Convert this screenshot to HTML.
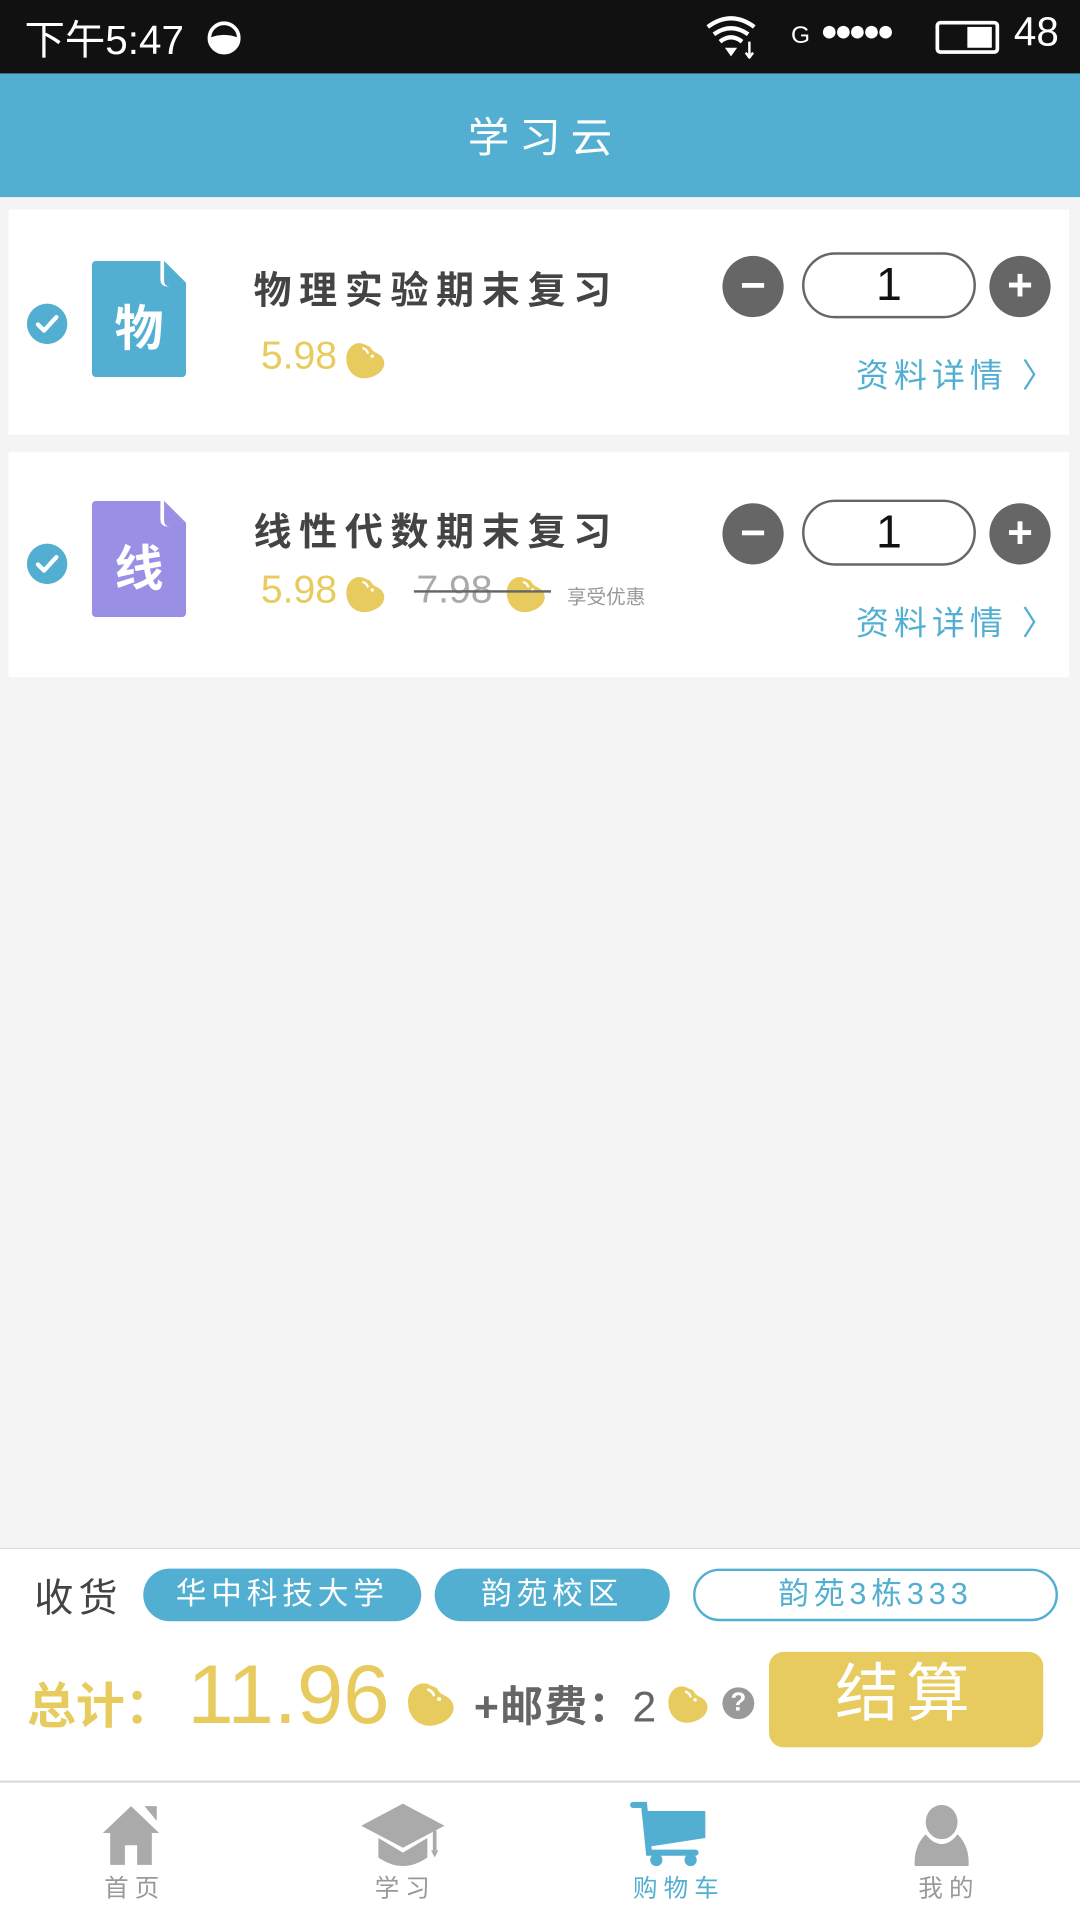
<!DOCTYPE html>
<html><head><meta charset="utf-8"><style>
*{margin:0;padding:0;box-sizing:border-box}
html,body{width:1080px;height:1920px;overflow:hidden;background:#f4f4f4}
#s{position:absolute;left:0;top:0;width:882px;height:1568px;transform:scale(1.22449);transform-origin:0 0;font-family:"Liberation Sans","Noto Sans CJK SC",sans-serif;background:#f4f4f4}
.a{position:absolute;white-space:nowrap}
.card{position:absolute;left:7px;width:866px;height:184px;background:#fff}
.chk{position:absolute;left:15px;width:33px;height:33px;border-radius:50%;background:#52afd1}
.title{position:absolute;left:200px;font-size:31px;font-weight:bold;color:#444;letter-spacing:6.3px}
.price{position:absolute;font-size:32px;color:#e8cb5e}
.btn{position:absolute;width:50px;height:50px;border-radius:50%;background:#666;color:#fff;text-align:center;line-height:48px;font-size:36px;font-weight:bold}
.qty{position:absolute;left:648px;width:142px;height:54px;border:2px solid #666;border-radius:27px;text-align:center;font-size:38px;line-height:50px;color:#111}
.det{position:absolute;left:692px;font-size:27px;color:#52afd1;letter-spacing:4px}
.pill{position:absolute;top:1281px;height:43px;border-radius:22px;background:#52afd1;color:#fff;font-size:25px;text-align:center;line-height:43px;letter-spacing:4px}
.tab{position:absolute;top:1526px;font-size:20px;color:#999;letter-spacing:5px}
</style></head><body><div id="s">
<svg width="0" height="0" style="position:absolute"><defs>
<symbol id="bean" viewBox="0 0 40 36"><path d="M20 4C12 -1 2 6 3 18C4 30 14 36 24 33C36 30 40 20 34 14C31 11 27 11 25 7C24 5 22 5 20 4Z" fill="#e8cb5e"/><path d="M18 7Q21 8 22 11" stroke="#fff" stroke-width="2" fill="none" stroke-linecap="round"/><circle cx="26" cy="14" r="1.5" fill="#fff"/></symbol>
<symbol id="chk" viewBox="0 0 33 33"><path d="M9 17L14 22L24 11" stroke="#fff" stroke-width="3.5" fill="none" stroke-linecap="round" stroke-linejoin="round"/></symbol>
</defs></svg>
<div class="a" style="left:0;top:0;width:882px;height:60px;background:#111"></div>
<div class="a" style="left:20px;top:6px;font-size:33px;color:#fff">下午5:47</div>
<svg class="a" style="left:168px;top:16px" width="30" height="30"><circle cx="15" cy="15" r="12" fill="none" stroke="#fff" stroke-width="3"/><path d="M3 15A12 12 0 0 0 27 15Z" fill="#fff"/><path d="M3 15Q15 10 27 15" fill="#fff"/></svg>
<svg class="a" style="left:575px;top:12px" width="45" height="36"><path d="M3 10Q22 -4 41 10M8 16Q22 6 36 16M13 22Q22 15 31 22" stroke="#fff" stroke-width="3.5" fill="none"/><path d="M17 27L27 27L22 34Z" fill="#fff"/><path d="M37 22V34M34 31L37 35L40 31" stroke="#fff" stroke-width="2" fill="none"/></svg>
<div class="a" style="left:646px;top:18px;font-size:20px;color:#fff">G</div>
<div class="a" style="left:670px;top:12px;font-size:24px;color:#fff;letter-spacing:-3px">●●●●●</div>
<div class="a" style="left:764px;top:17px;width:52px;height:27px;border:3px solid #fff;border-radius:4px"></div>
<div class="a" style="left:790px;top:22px;width:20px;height:17px;background:#fff"></div>
<div class="a" style="left:828px;top:7px;font-size:33px;color:#fff">48</div>
<div class="a" style="left:0;top:60px;width:882px;height:101px;background:#52afd1"></div>
<div class="a" style="left:4px;top:85px;width:882px;text-align:center;font-size:34px;color:#fff;letter-spacing:8px">学习云</div>
<div class="card" style="top:171px"></div>
<div class="chk" style="left:22px;top:248px"><svg width="33" height="33"><use href="#chk"/></svg></div>
<svg class="a" style="left:75px;top:213px" width="77" height="95"><path d="M4 0H56L77 21V91Q77 95 73 95H4Q0 95 0 91V4Q0 0 4 0Z" fill="#52afd1"/><path d="M56 0V15Q56 21 62 21H77" fill="#fff"/><path d="M59 0L77 18V21H64Q59 21 59 16Z" fill="#52afd1"/></svg>
<div class="a" style="left:75px;top:236px;width:77px;text-align:center;font-size:40px;font-weight:bold;color:#fff">物</div>
<div class="title" style="left:207px;top:212px">物理实验期末复习</div>
<div class="price" style="left:213px;top:272px">5.98</div>
<svg class="a" style="left:280px;top:278px" width="37" height="33"><use href="#bean"/></svg>
<div class="btn" style="left:590px;top:209px">−</div>
<div class="qty" style="left:655px;top:206px">1</div>
<div class="btn" style="left:808px;top:209px">+</div>
<div class="det" style="left:699px;top:285px">资料详情 〉</div>
<div class="card" style="top:369px"></div>
<div class="chk" style="left:22px;top:444px"><svg width="33" height="33"><use href="#chk"/></svg></div>
<svg class="a" style="left:75px;top:409px" width="77" height="95"><path d="M4 0H56L77 21V91Q77 95 73 95H4Q0 95 0 91V4Q0 0 4 0Z" fill="#9990e6"/><path d="M56 0V15Q56 21 62 21H77" fill="#fff"/><path d="M59 0L77 18V21H64Q59 21 59 16Z" fill="#9990e6"/></svg>
<div class="a" style="left:75px;top:432px;width:77px;text-align:center;font-size:40px;font-weight:bold;color:#fff">线</div>
<div class="title" style="left:207px;top:409px">线性代数期末复习</div>
<div class="price" style="left:213px;top:463px">5.98</div>
<svg class="a" style="left:280px;top:469px" width="37" height="33"><use href="#bean"/></svg>
<div class="price" style="left:340px;top:463px;color:#aaa">7.98</div>
<svg class="a" style="left:411px;top:469px" width="37" height="33"><use href="#bean"/></svg>
<div class="a" style="left:338px;top:482px;width:112px;height:2px;background:#666"></div>
<div class="a" style="left:463px;top:474px;font-size:16px;color:#999">享受优惠</div>
<div class="btn" style="left:590px;top:411px">−</div>
<div class="qty" style="left:655px;top:408px">1</div>
<div class="btn" style="left:808px;top:411px">+</div>
<div class="det" style="left:699px;top:487px">资料详情 〉</div>
<div class="a" style="left:0;top:1264px;width:882px;height:190px;background:#fff;border-top:1px solid #ddd"></div>
<div class="a" style="left:28px;top:1280px;font-size:32px;color:#444;letter-spacing:4px">收货</div>
<div class="pill" style="left:117px;width:227px">华中科技大学</div>
<div class="pill" style="left:355px;width:192px">韵苑校区</div>
<div class="pill" style="left:566px;width:298px;background:#fff;border:2px solid #52afd1;color:#52afd1;line-height:39px">韵苑3栋333</div>
<div class="a" style="left:22px;top:1361px;font-size:40px;font-weight:bold;color:#e8cb5e">总计：</div>
<div class="a" style="left:153px;top:1345px;font-size:68px;color:#e8cb5e">11.96</div>
<svg class="a" style="left:330px;top:1372px" width="44" height="40"><use href="#bean"/></svg>
<div class="a" style="left:387px;top:1366px;font-size:35px;font-weight:bold;color:#666;letter-spacing:1px">+邮费：<span style="font-weight:normal">2</span></div>
<svg class="a" style="left:543px;top:1375px" width="38" height="34"><use href="#bean"/></svg>
<div class="a" style="left:590px;top:1378px;width:26px;height:26px;border-radius:50%;background:#999;color:#fff;font-size:21px;font-weight:bold;text-align:center;line-height:26px">?</div>
<div class="a" style="left:628px;top:1349px;width:224px;height:78px;border-radius:12px;background:#e8cb5e;color:#fff;font-size:52px;text-align:center;line-height:70px;letter-spacing:6px">结算</div>
<div class="a" style="left:0;top:1454px;width:882px;height:114px;background:#fff;border-top:2px solid #ddd"></div>
<svg class="a" style="left:82px;top:1473px" width="50" height="52"><path d="M25 2L2 24H8V50H20V34H30V50H42V24H48Z" fill="#aaa"/><path d="M36 2H46V14Z" fill="#aaa"/></svg>
<svg class="a" style="left:295px;top:1473px" width="68" height="52"><path d="M34 0L68 18L34 36L0 18Z" fill="#aaa"/><path d="M14 28V44Q34 58 54 44V28L34 40Z" fill="#aaa"/><path d="M60 22V38" stroke="#aaa" stroke-width="3"/><path d="M57 38H63L60 44Z" fill="#aaa"/></svg>
<svg class="a" style="left:514px;top:1471px" width="64" height="54"><path d="M3 3H12L16 42H54" stroke="#52afd1" stroke-width="5" fill="none" stroke-linecap="round"/><path d="M14 8H62V30L17 37Z" fill="#52afd1"/><circle cx="22" cy="48" r="5" fill="#52afd1"/><circle cx="50" cy="48" r="5" fill="#52afd1"/></svg>
<svg class="a" style="left:746px;top:1474px" width="46" height="50"><ellipse cx="23" cy="14" rx="13" ry="14" fill="#aaa"/><path d="M10 24Q0 34 1 50H45Q46 34 36 24Q30 32 23 32Q16 32 10 24Z" fill="#aaa"/></svg>
<div class="tab" style="left:85px">首页</div>
<div class="tab" style="left:306px">学习</div>
<div class="tab" style="left:517px;color:#52afd1">购物车</div>
<div class="tab" style="left:750px">我的</div>
</div></body></html>
